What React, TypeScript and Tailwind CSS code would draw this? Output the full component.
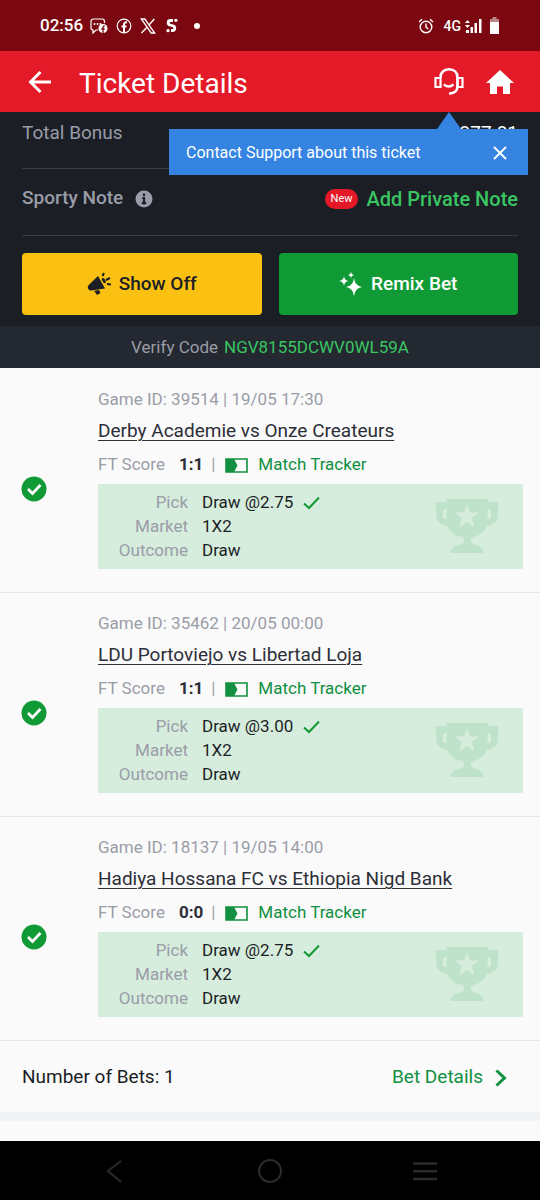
import type { ReactNode } from "react";

type Match = { id: string; time: string; teams: string; score: string; odds: string };

const matches: Match[] = [
  { id: "39514", time: "19/05 17:30", teams: "Derby Academie vs Onze Createurs", score: "1:1", odds: "2.75" },
  { id: "35462", time: "20/05 00:00", teams: "LDU Portoviejo vs Libertad Loja", score: "1:1", odds: "3.00" },
  { id: "18137", time: "19/05 14:00", teams: "Hadiya Hossana FC vs Ethiopia Nigd Bank", score: "0:0", odds: "2.75" },
];

function StatusBar() {
  return (
    <div className="flex h-[51px] items-center justify-between bg-[#7b0810] pr-[41px] pl-10 text-white">
      <div className="flex items-center">
        <span className="w-[50px] text-[17px] font-medium">02:56</span>
        <svg className="h-4 w-[18px]" viewBox="0 0 18 16" fill="none">
          <path d="M8 12H6L3 15V12C1.500 12 1 11 1 10V3.500C1 2 2 1 3.500 1H12C13.500 1 14.500 2 14.500 3.500V5" stroke="currentColor" strokeWidth="1.200" />
          <circle cx="4.500" cy="6" r="1" fill="currentColor" />
          <circle cx="7.500" cy="6" r="1" fill="currentColor" />
          <circle cx="10.500" cy="6" r="1" fill="currentColor" />
          <circle cx="13" cy="10.500" r="4.500" fill="currentColor" />
          <path d="M13 15V9.500C13 8.500 13.500 8 14.700 8M11.300 11H14.700" stroke="#7b0810" strokeWidth="1.300" />
        </svg>
        <svg className="ml-2 h-4 w-4" viewBox="0 0 16 16" fill="none">
          <circle cx="8" cy="8" r="6.800" stroke="currentColor" strokeWidth="1.200" />
          <path d="M8 14.500V6.500C8 5 9 4 11 4.500M5.500 8.500H10.500" stroke="currentColor" strokeWidth="2" />
        </svg>
        <svg className="ml-2 h-4 w-4" viewBox="0 0 16 16" fill="none" stroke="currentColor">
          <path d="M1.300 1H4.800L14.700 15H11.200Z" strokeWidth="1.300" />
          <path d="M14.300 1L8.800 7.200M7 9.200L1.500 15" strokeWidth="1.400" />
        </svg>
        <svg className="ml-2.5 h-[15px] w-3" viewBox="0 0 12 15" fill="none">
          <path d="M7 2.500H4.500C1.500 2.500 1.500 6.300 4 7L7.500 8C9.500 9 9 12.500 6.500 12.500H5" stroke="currentColor" strokeWidth="2.800" />
          <circle cx="2" cy="12.700" r="1.600" fill="currentColor" />
          <circle cx="9.900" cy="2.300" r="1.600" fill="currentColor" />
        </svg>
        <span className="ml-4 size-1.5 rounded-full bg-white" />
      </div>
      <div className="flex items-center">
        <svg className="size-4" viewBox="0 0 16 16" fill="none" stroke="currentColor" strokeWidth="1.400">
          <circle cx="8" cy="9" r="5.800" />
          <path d="M8 5.500V9.200L10.300 11M1 4L4 1.300M15 4L12 1.300" />
        </svg>
        <span className="ml-2.5 text-sm font-medium">4G</span>
        <svg className="ml-1 h-4 w-[17px]" viewBox="0 0 17 16" fill="currentColor">
          <path d="M2.500 2L5 5H0ZM0 7H5L2.500 10ZM1 12H4V15H1ZM5.500 9H8V15H5.500ZM9.500 5H12V15H9.500ZM14 1H16.500V15H14Z" />
        </svg>
        <svg className="ml-2 h-[18px] w-[9px]" viewBox="0 0 9 18">
          <path d="M2.500 0H6.500V2H9V7H0V2H2.500Z" fill="#bd848a" />
          <path d="M0 5H9V17H0Z" fill="currentColor" />
        </svg>
      </div>
    </div>
  );
}

function Header() {
  return (
    <header className="relative z-10 flex h-[61px] items-center bg-[#e51a28] pr-[26px] pl-7 text-white">
      <button aria-label="Go back">
        <svg className="size-6" viewBox="0 0 24 24" fill="none" stroke="currentColor" strokeWidth="3">
          <path d="M23 12H2.500M12.500 2L2.500 12L12.500 22" />
        </svg>
      </button>
      <h1 className="ml-[27px] grow pt-1 text-[28px] leading-8">Ticket Details</h1>
      <button aria-label="Contact support">
        <svg className="h-[27px] w-[30px]" viewBox="0 0 30 27" fill="none" stroke="currentColor" strokeWidth="2.200">
          <path d="M6.500 10V9.500C6.500 4.500 10 1.300 15 1.300S23.500 4.500 23.500 9.500V18C23.500 22.500 20.500 25.500 15 25.500" strokeWidth="2.600" />
          <path d="M1.500 10H6.500V19H1.500ZM23.500 10H28.500V19H23.500Z" />
          <path d="M9.800 16.300Q15 20.700 19.500 16.300" strokeWidth="2.400" />
        </svg>
      </button>
      <a href="#home" aria-label="Home" className="ml-[22px]">
        <svg className="h-[26px] w-7" viewBox="0 0 28 26" fill="currentColor">
          <path d="M14 1L28 14H24V25H17V17.500H11V25H4V14H0Z" />
        </svg>
      </a>
    </header>
  );
}

function Tooltip() {
  return (
    <div role="tooltip" className="absolute top-0 right-3 left-[169px] z-20">
      <svg className="ml-[268px] block h-[17px] w-6" viewBox="0 0 24 17" fill="#3584e2">
        <path d="M12 0L24 17H0Z" />
      </svg>
      <div className="flex h-[46px] items-center justify-between bg-[#3584e2] pt-px pr-5 pl-[17px] text-base text-white">
        <span>Contact Support about this ticket</span>
        <button aria-label="Close">
          <svg className="size-4" viewBox="0 0 16 16" stroke="currentColor" strokeWidth="1.800">
            <path d="M2 2L14 14M14 2L2 14" />
          </svg>
        </button>
      </div>
    </div>
  );
}

function Summary() {
  return (
    <section className="relative bg-[#1b1e25] px-[22px] pb-[11px] text-[#9a9da8]">
      <div className="flex h-14 items-center justify-between pb-[13px] text-[19px]">
        <span>Total Bonus</span>
        <span className="text-white">377.81</span>
      </div>
      <div className="border-t border-[#3b3d45]" />
      <div className="flex h-[66px] items-center pb-[7px] text-[19px]">
        <span className="font-medium">Sporty Note</span>
        <svg className="ml-3 size-[18px]" viewBox="0 0 18 18">
          <circle cx="9" cy="9" r="8.500" fill="currentColor" />
          <path d="M9 3.500V6M7.300 8H9V13M6.800 13.200H11.200" stroke="#1b1e25" strokeWidth="2.200" fill="none" />
        </svg>
        <span className="ml-auto rounded-full bg-[#e41827] px-1.5 text-[11px] leading-5 text-white">New</span>
        <button className="ml-2 text-xl font-medium text-[#39c662]">Add Private Note</button>
      </div>
      <div className="border-t border-[#3b3d45]" />
      <div className="mt-[17px] grid grid-cols-2 gap-[17px] text-[19px] font-medium">
        <button className="flex h-[62px] items-center justify-center rounded-sm bg-[#fac113] text-[#1b1e25]">
          <svg className="mr-2 size-6" viewBox="0 0 24 24" fill="currentColor">
            <path d="M11 4L18 16.500L4.500 18.500Q2 19 1 16.500Q0 14.500 2 12.800ZM7 19L12 18L13.500 21L10 23L8 20Z" />
            <path d="M15 7Q18 8 17.500 11" stroke="currentColor" strokeWidth="2.500" fill="none" />
            <path d="M15.500 4L17 1M19 8L23 6M20 12L24 12.500" stroke="currentColor" strokeWidth="2" />
          </svg>
          Show Off
        </button>
        <button className="flex h-[62px] items-center justify-center rounded-sm bg-[#109a36] text-white">
          <svg className="mr-2 size-6" viewBox="0 0 24 24" fill="currentColor">
            <path d="M15 6Q16 14 23 15Q16 16 15 24Q14 16 7 15Q14 14 15 6ZM5 4Q5.500 8.500 9.500 9Q5.500 9.500 5 14Q4.500 9.500 0 9Q4.500 8.500 5 4ZM12 0Q12.300 2.700 15 3Q12.300 3.300 12 6Q11.700 3.300 9 3Q11.700 2.700 12 0Z" />
          </svg>
          Remix Bet
        </button>
      </div>
      <Tooltip />
    </section>
  );
}

function Field({ label, children }: { label: string; children: ReactNode }) {
  return (
    <div className="flex h-6 items-center">
      <dt className="w-[90px] text-right text-[#9a9da8]">{label}</dt>
      <dd className="ml-[14px] flex items-center text-[#1b1e25]">{children}</dd>
    </div>
  );
}

function Trophy() {
  return (
    <svg className="h-[54px] w-16 text-[#bfe2ca]" viewBox="0 0 64 54">
      <path
        fill="currentColor"
        fillRule="evenodd"
        d="M11 0H53V3H63V15Q63 25 52 27Q48 36 36 39V43Q39 46 44 47Q47 48 49 54H15Q17 48 20 47Q26 46 29 43V39Q16 36 12 27Q1 25 1 15V3H11ZM9.500 10Q8 10 8 12V18Q8 20 9.500 20H11.500V10ZM54.500 10Q56 10 56 12V18Q56 20 54.500 20H52.500V10Z"
      />
      <path fill="#d6ecdc" d="M32 5L35 13.500H44L37 19L39.500 28L32 23L24.500 28L27 19L20 13.500H29Z" />
    </svg>
  );
}

function MatchCard({ match }: { match: Match }) {
  return (
    <li className="flex items-center border-b border-[#e3e5e8] pt-[18px] pr-[17px] pb-[23px] pl-[21px] text-[17px]">
      <svg className="mt-[22px] size-[26px] shrink-0" viewBox="0 0 26 26" fill="none">
        <circle cx="13" cy="13" r="12.500" fill="#109a36" />
        <path d="M7 13L11.500 17.500L19.500 9" stroke="white" strokeWidth="2.800" />
      </svg>
      <div className="ml-[51px] grow">
        <p className="leading-6 text-[#9a9da8]">
          Game ID: {match.id} | {match.time}
        </p>
        <h2 className="mt-2 text-[19px] leading-6 text-[#2c2e38] underline decoration-1 underline-offset-3">{match.teams}</h2>
        <div className="mt-2.5 flex h-6 items-center text-[#9a9da8]">
          <span>FT Score</span>
          <span className="ml-3.5 font-bold text-[#2c2e38]">{match.score}</span>
          <span className="ml-2">|</span>
          <a href="#tracker" className="ml-2.5 flex items-center text-[#109040]">
            <svg className="mr-2.5 h-[15px] w-[23px]" viewBox="0 0 23 15">
              <path d="M1 1H22V14H1Z" fill="none" stroke="currentColor" strokeWidth="1.600" />
              <path d="M1 1H9L12.500 7.500L9 14H1Z" fill="currentColor" />
            </svg>
            Match Tracker
          </a>
        </div>
        <div className="mt-[7px] flex items-start justify-between bg-[#d6ecdc] pr-6">
          <dl className="pt-[7px] pb-1.5">
            <Field label="Pick">
              Draw @{match.odds}
              <svg className="ml-2.5 h-3.5 w-[17px]" viewBox="0 0 17 14" fill="none" stroke="#109a36" strokeWidth="2">
                <path d="M1 7.500L6 12L16 1.500" />
              </svg>
            </Field>
            <Field label="Market">1X2</Field>
            <Field label="Outcome">Draw</Field>
          </dl>
          <div className="pt-[15px]">
            <Trophy />
          </div>
        </div>
      </div>
    </li>
  );
}

function SystemNav() {
  return (
    <nav className="flex h-[59px] items-center justify-between bg-black px-[101px] text-[#2b2b2b]">
      <button aria-label="Back">
        <svg className="size-7" viewBox="0 0 28 28" fill="none" stroke="currentColor" strokeWidth="2">
          <path d="M20 4L7 14L20 25" />
        </svg>
      </button>
      <button aria-label="Home">
        <svg className="size-7" viewBox="0 0 28 28" fill="none" stroke="currentColor" strokeWidth="2">
          <circle cx="14" cy="14" r="11" />
        </svg>
      </button>
      <button aria-label="Recent apps">
        <svg className="size-7" viewBox="0 0 28 28" stroke="currentColor" strokeWidth="2.500">
          <path d="M2 6.500H26M2 14.300H26M2 22H26" />
        </svg>
      </button>
    </nav>
  );
}

export default function App() {
  return (
    <div className="flex min-h-screen flex-col bg-[#fafafa] font-[Roboto,'Liberation_Sans',sans-serif]">
      <StatusBar />
      <Header />
      <main>
        <Summary />
        <div className="flex h-[42px] items-center justify-center bg-[#242830] pt-0.5 text-[17px] text-[#9a9da8]">
          Verify Code <span className="ml-1.5 text-[#39c662]">NGV8155DCWV0WL59A</span>
        </div>
        <ul className="pt-px">
          {matches.map((match) => (
            <MatchCard key={match.id} match={match} />
          ))}
        </ul>
        <div className="flex h-[71px] items-center justify-between pt-0.5 pr-[33px] pl-[22px] text-[19px] text-[#1b1e25]">
          <span>Number of Bets: 1</span>
          <a href="#bet-details" className="flex items-center text-[#109040]">
            Bet Details
            <svg className="ml-3 h-[18px] w-3" viewBox="0 0 12 18" fill="none" stroke="currentColor" strokeWidth="3">
              <path d="M1.500 1.500L9.500 9L1.500 16.500" />
            </svg>
          </a>
        </div>
        <div className="h-[9px] bg-[#f0f2f4]" />
      </main>
      <div className="mt-auto">
        <SystemNav />
      </div>
    </div>
  );
}
